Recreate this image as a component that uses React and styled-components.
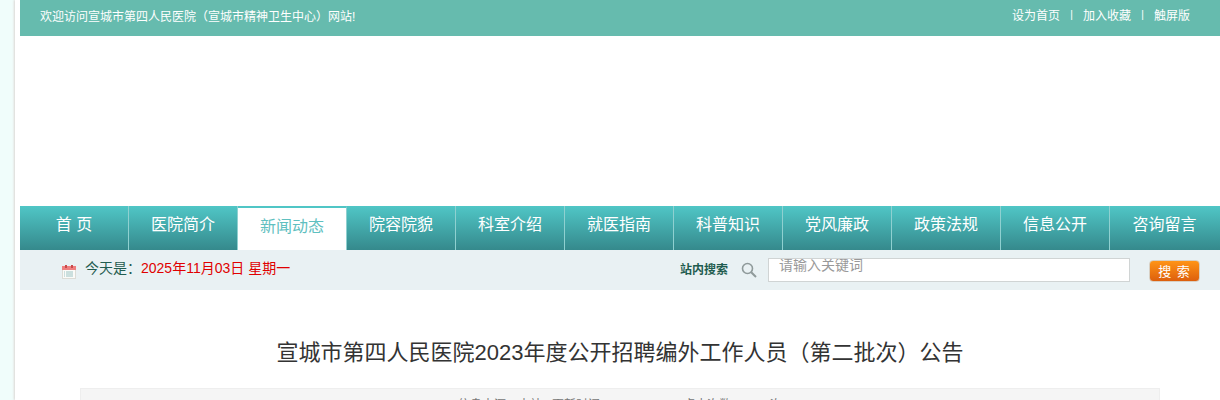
import React from "react";
import styled, { createGlobalStyle } from "styled-components";

const GlobalStyle = createGlobalStyle`
  html, body {
    margin: 0;
    padding: 0;
    height: 400px;
    overflow: hidden;
    background: #f0fdfb;
    font-family: "Liberation Sans", "Noto Sans CJK SC", sans-serif;
  }
`;

const navItems = [
  "首 页",
  "医院简介",
  "新闻动态",
  "院容院貌",
  "科室介绍",
  "就医指南",
  "科普知识",
  "党风廉政",
  "政策法规",
  "信息公开",
  "咨询留言",
];

const App = () => {
  return (
    <Page>
      <GlobalStyle />
      <TopBar>
        <span>欢迎访问宣城市第四人民医院（宣城市精神卫生中心）网站!</span>
        <TopLinks>
          <TopLink>设为首页</TopLink>
          <Sep>|</Sep>
          <TopLink>加入收藏</TopLink>
          <Sep>|</Sep>
          <TopLink>触屏版</TopLink>
        </TopLinks>
      </TopBar>
      <Banner />
      <Nav>
        {navItems.map((item) => (
          <NavItem key={item} $active={item === "新闻动态"}>
            {item}
          </NavItem>
        ))}
      </Nav>
      <InfoBar>
        <DateBox>
          <CalendarWrap>
            <CalendarIcon />
          </CalendarWrap>
          <span>今天是：</span>
          <DateText>2025年11月03日 星期一</DateText>
        </DateBox>
        <SearchBox>
          <SearchLabel>站内搜索</SearchLabel>
          <SearchIconWrap>
            <SearchIcon />
          </SearchIconWrap>
          <SearchInput placeholder="请输入关键词" />
          <SearchButton>搜 索</SearchButton>
        </SearchBox>
      </InfoBar>
      <Title>宣城市第四人民医院2023年度公开招聘编外工作人员（第二批次）公告</Title>
      <MetaRow>信息来源：本站   更新时间：2023-06-14   点击次数：3917次</MetaRow>
    </Page>
  );
};

const CalendarIcon = () => (
  <svg width="14" height="14" viewBox="0 0 14 14">
    <rect x="0.5" y="1.5" width="13" height="12" fill="#fbfbf8" stroke="#dcdcd6" />
    <rect x="0" y="1" width="14" height="4" fill="#ee7f7f" />
    <rect x="3" y="0" width="2" height="3" fill="#c94a4a" />
    <rect x="9" y="0" width="2" height="3" fill="#c94a4a" />
    <path d="M2 7h1M4 7h7M2 9h1M4 9h7M2 11h1M4 11h7" stroke="#9cc4c4" />
  </svg>
);

const SearchIcon = () => (
  <svg width="16" height="16" viewBox="0 0 16 16" fill="none" stroke="#8f9a9a" strokeWidth="1.6">
    <circle cx="6.5" cy="6.5" r="5" />
    <path d="M10.2 10.2L15 15" strokeWidth="2" />
  </svg>
);

export default App;

const Page = styled.div`
  box-sizing: border-box;
  margin-left: 15px;
  padding-left: 5px;
  height: 400px;
  overflow: hidden;
  background: #fff;
  box-shadow: -1px 0 2px #dcd6d3;
`;

const TopBar = styled.div`
  display: flex;
  justify-content: space-between;
  align-items: center;
  box-sizing: border-box;
  height: 36px;
  padding: 0 30px 6px 20px;
  background: #66bbae;
  color: #fff;
  font-size: 12px;
`;

const TopLinks = styled.div`
  display: flex;
  gap: 9px;
`;

const TopLink = styled.span``;

const Sep = styled.span`
  width: 5px;
  text-align: center;
  font-size: 10px;
  line-height: 18px;
`;

const Banner = styled.div`
  height: 170px;
`;

const Nav = styled.div`
  display: flex;
  height: 44px;
  background: linear-gradient(#50c6c6, #35898c);
`;

const NavItem = styled.div`
  box-sizing: border-box;
  width: 109px;
  height: 44px;
  line-height: 38px;
  text-align: center;
  font-size: 16px;
  color: ${(p) => (p.$active ? "#5fc0c0" : "#fff")};
  background: ${(p) => (p.$active ? "#fff" : "transparent")};
  border-top: ${(p) => (p.$active ? "2px solid #50c6c6" : "0")};
  border-right: 1px solid #8fd0d0;
  &:last-child {
    border-right: 0;
  }
`;

const InfoBar = styled.div`
  display: flex;
  justify-content: space-between;
  align-items: center;
  box-sizing: border-box;
  height: 40px;
  padding: 0 20px 4px 42px;
  background: #e9f1f3;
  font-size: 14px;
`;

const DateBox = styled.div`
  display: flex;
  align-items: center;
  margin-bottom: 2px;
  color: #1f5c4f;
`;

const CalendarWrap = styled.span`
  display: flex;
  margin: 5px 9px -5px 0;
`;

const DateText = styled.span`
  color: #e00000;
`;

const SearchBox = styled.div`
  display: flex;
  align-items: center;
`;

const SearchLabel = styled.span`
  margin-right: 13px;
  font-size: 12px;
  font-weight: 700;
  color: #1f5c4f;
`;

const SearchIconWrap = styled.span`
  display: flex;
  margin-top: 4px;
`;

const SearchInput = styled.input`
  box-sizing: border-box;
  width: 362px;
  height: 24px;
  margin: 4px 0 0 11px;
  padding: 0 10px 10px;
  border: 1px solid #d0d4d4;
  background: #fff;
  font-family: inherit;
  font-size: 14px;
  outline: none;
  &::placeholder {
    color: #999;
  }
`;

const SearchButton = styled.button`
  box-sizing: border-box;
  width: 51px;
  height: 22px;
  margin: 5px 0 0 19px;
  padding: 0;
  border: 1px solid #d8d0c4;
  border-radius: 4px;
  background: linear-gradient(#ff9416, #dd5f0d);
  color: #fff;
  font-family: inherit;
  font-size: 13px;
  letter-spacing: 1px;
`;

const Title = styled.h1`
  margin: 50px 0 0;
  line-height: 26px;
  text-align: center;
  font-size: 22px;
  font-weight: 400;
  color: #333;
`;

const MetaRow = styled.div`
  box-sizing: border-box;
  width: 1080px;
  height: 40px;
  margin: 22px 0 0 60px;
  padding-top: 6px;
  background: #f5f5f5;
  border: 1px solid #eee;
  text-align: center;
  white-space: pre;
  font-size: 12px;
  color: #777;
`;
